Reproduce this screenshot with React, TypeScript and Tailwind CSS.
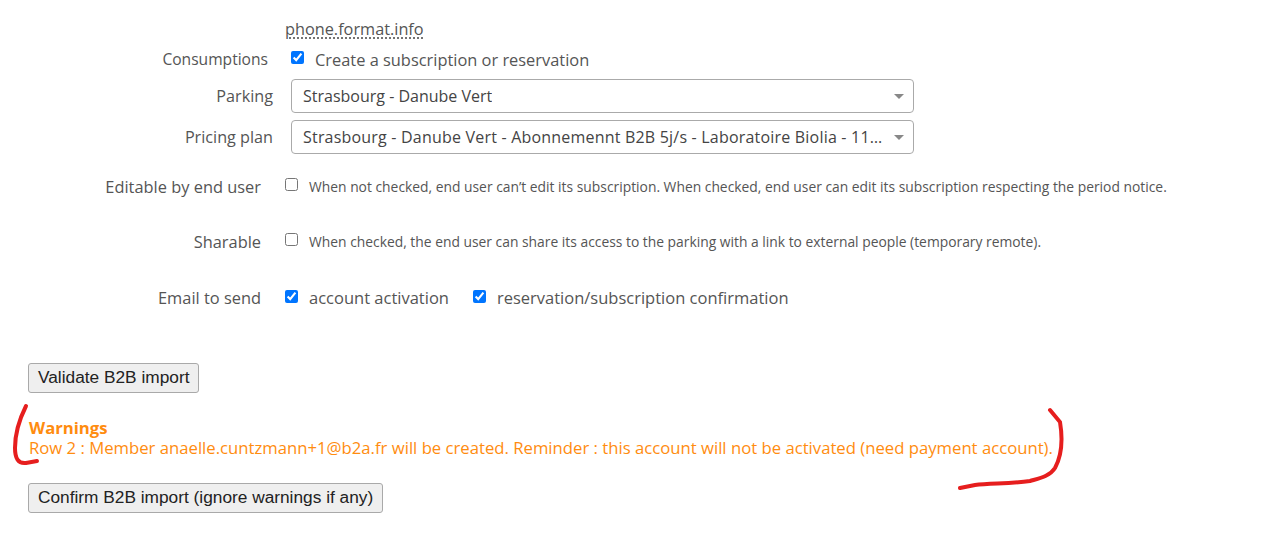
import React from "react";

const F = { fontFamily: "'Open Sans', 'Noto Sans', sans-serif" };
const A = { fontFamily: "'Liberation Sans', Arial, sans-serif" };

function FakeSelect({ text, wide }: { text: string; wide?: boolean }) {
  return (
    <div className="relative flex items-center w-[623px] h-[34px] border border-[#aaaaaa] rounded-[4px] bg-white pl-[11px] pr-[30px]">
      <span className={(wide ? "tracking-[0.2px] " : "") + "whitespace-nowrap overflow-hidden text-[16px] text-[#444444]"}>{text}</span>
      <span className="absolute right-[9px] top-[14px] w-0 h-0 border-l-[5px] border-r-[5px] border-t-[5px] border-l-transparent border-r-transparent border-t-[#888888]" />
    </div>
  );
}

function Btn({ children }: { children: React.ReactNode }) {
  return (
    <button
      style={A}
      className="h-[30px] px-[9px] text-[17.3px] text-[#222222] bg-[#efefef] border border-[#a9a9a9] rounded-[3px] leading-none"
    >
      {children}
    </button>
  );
}

export default function App() {
  return (
    <div style={F} className="relative w-[1262px] h-[533px] bg-white text-[#555555] overflow-hidden">
      <div className="pt-[19px]">
        {/* phone.format.info */}
        <div className="pl-[285px] h-[20px] flex items-center">
          <span className="text-[16.3px] text-[#555555] underline decoration-dotted underline-offset-[3px]">phone.format.info</span>
        </div>

        {/* Consumptions */}
        <div className="flex items-center h-[24px] mt-[9px]">
          <div className="w-[268px] text-right text-[15.6px]">Consumptions</div>
          <div className="flex items-center ml-[23px]">
            <input type="checkbox" defaultChecked className="w-[13px] h-[13px] m-0 mb-[6px]" />
            <span className="ml-[11px] text-[16.4px]">Create a subscription or reservation</span>
          </div>
        </div>

        {/* Parking */}
        <div className="flex items-center mt-[7px]">
          <div className="w-[273px] text-right text-[16.2px]">Parking</div>
          <div className="ml-[18px]">
            <FakeSelect text="Strasbourg - Danube Vert" />
          </div>
        </div>

        {/* Pricing plan */}
        <div className="flex items-center mt-[7px]">
          <div className="w-[273px] text-right text-[16.2px]">Pricing plan</div>
          <div className="ml-[18px]">
            <FakeSelect wide text="Strasbourg - Danube Vert - Abonnemennt B2B 5j/s - Laboratoire Biolia - 11…" />
          </div>
        </div>

        {/* Editable */}
        <div className="flex items-center h-[24px] mt-[21px]">
          <div className="w-[261px] text-right text-[16.4px]">Editable by end user</div>
          <div className="flex items-center ml-[24px]">
            <input type="checkbox" className="w-[13px] h-[13px] m-0 mb-[4px]" />
            <span className="ml-[11px] text-[13.85px]">
              When not checked, end user can’t edit its subscription. When checked, end user can edit its subscription respecting the period notice.
            </span>
          </div>
        </div>

        {/* Sharable */}
        <div className="flex items-center h-[24px] mt-[31px]">
          <div className="w-[261px] text-right text-[16.4px]">Sharable</div>
          <div className="flex items-center ml-[24px]">
            <input type="checkbox" className="w-[13px] h-[13px] m-0 mb-[4px]" />
            <span className="ml-[11px] text-[13.85px]">
              When checked, the end user can share its access to the parking with a link to external people (temporary remote).
            </span>
          </div>
        </div>

        {/* Email to send */}
        <div className="flex items-center h-[24px] mt-[32px]">
          <div className="w-[261px] text-right text-[16.4px]">Email to send</div>
          <div className="flex items-center ml-[24px]">
            <input type="checkbox" defaultChecked className="w-[13px] h-[13px] m-0 mb-[4px]" />
            <span className="ml-[11px] text-[16.5px]">account activation</span>
            <input type="checkbox" defaultChecked className="w-[13px] h-[13px] m-0 mb-[4px] ml-[24px]" />
            <span className="ml-[11px] text-[16.5px]">reservation/subscription confirmation</span>
          </div>
        </div>

        {/* Validate */}
        <div className="pl-[28px] mt-[53px]">
          <Btn>Validate B2B import</Btn>
        </div>

        {/* Warnings */}
        <div className="pl-[29px] mt-[25px] text-[#ff8c0f] text-[16.7px] leading-[20px]">
          <div className="font-bold">Warnings</div>
          <div>
            Row 2 : Member anaelle.cuntzmann+1@b2a.fr will be created. Reminder : this account will not be activated (need payment account).
          </div>
        </div>

        {/* Confirm */}
        <div className="pl-[28px] mt-[25px]">
          <Btn>Confirm B2B import (ignore warnings if any)</Btn>
        </div>
      </div>

      {/* red annotation marks */}
      <svg className="absolute left-0 top-0 pointer-events-none" width="1262" height="533">
        <path d="M26 406 C 20 418, 15 432, 15 448 C 15 458, 18 464, 26 463 L 37 461" fill="none" stroke="#e61e1e" strokeWidth="4" strokeLinecap="round" />
        <path d="M1050 410 L 1060 422 C 1063 440, 1062 455, 1055 468 C 1050 476, 1040 478, 1030 481 C 1010 484, 990 483, 975 485 L 960 488" fill="none" stroke="#e61e1e" strokeWidth="4" strokeLinecap="round" />
      </svg>
    </div>
  );
}
